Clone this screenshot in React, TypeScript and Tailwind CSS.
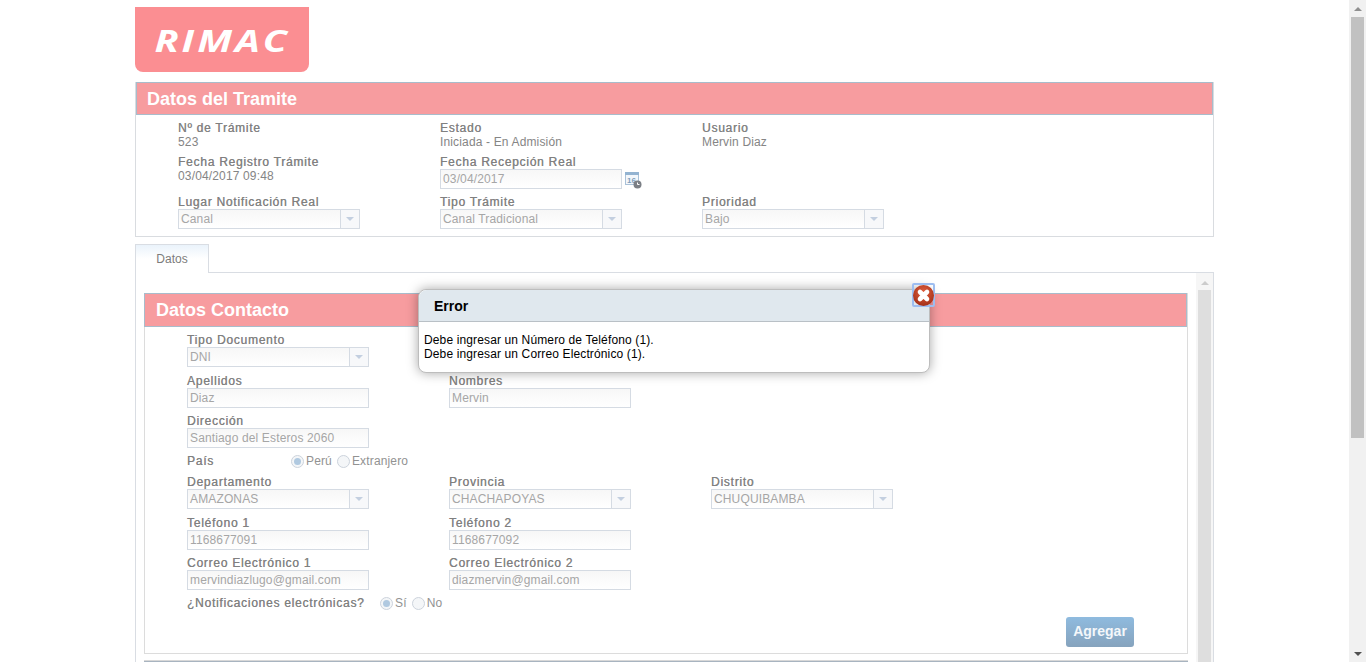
import React from "react";

const labelCls =
  "h-[14px] text-[12px] leading-[14px] tracking-[0.74px] text-[#808080] whitespace-nowrap [text-shadow:0.3px_0_0_#9c9c9c]";
const inputCls =
  "h-[20px] w-[182px] border border-[#d5dbe3] bg-gradient-to-b from-[#f7f7f7] to-white flex items-center text-[12px] leading-[14px] tracking-[0.14px] text-[#a6a6a6] whitespace-nowrap";

function Label({ children }: { children: React.ReactNode }) {
  return <div className={labelCls}>{children}</div>;
}

function Input({ value }: { value: string }) {
  return <div className={`${inputCls} pl-[2px]`}>{value}</div>;
}

function Select({ value }: { value: string }) {
  return (
    <div className={`${inputCls} mb-[1px]`}>
      <div className="flex-1 pl-[2px]">{value}</div>
      <div className="h-full w-[19px] border-l border-[#d5dbe3] bg-[#f7f8fa] flex items-center justify-center">
        <div className="w-0 h-0 border-l-[4px] border-r-[4px] border-t-[4px] border-l-transparent border-r-transparent border-t-[#c3cfe0]" />
      </div>
    </div>
  );
}

function Field({ label, children }: { label: string; children: React.ReactNode }) {
  return (
    <div className="flex flex-col">
      <Label>{label}</Label>
      {children}
    </div>
  );
}

function Row({ children, className = "" }: { children: React.ReactNode; className?: string }) {
  return <div className={`grid grid-cols-[262px_262px_262px] ${className}`}>{children}</div>;
}

function Value({ children }: { children: React.ReactNode }) {
  return (
    <div className="h-[14px] text-[12px] leading-[14px] tracking-[0.15px] text-[#858585] whitespace-nowrap">
      {children}
    </div>
  );
}

function Radio({ checked, label }: { checked?: boolean; label: string }) {
  return (
    <div className="flex items-center gap-[2px]">
      <div className="w-[13px] h-[13px] rounded-full border border-[#ccd3dc] bg-[#f4f6f8] flex items-center justify-center">
        {checked && <div className="w-[7px] h-[7px] rounded-full bg-[#b0c9e0]" />}
      </div>
      <span className="text-[12px] leading-[14px] tracking-[0.15px] text-[#929292]">{label}</span>
    </div>
  );
}

function Header({ children, className = "" }: { children: React.ReactNode; className?: string }) {
  return (
    <div className={`border border-[#a8bccb] bg-[#f79c9f] flex items-center text-[18px] font-bold leading-[20px] text-white ${className}`}>
      {children}
    </div>
  );
}

function ArrowUp({ color }: { color: string }) {
  return <div className={`w-0 h-0 border-l-[4px] border-r-[4px] border-b-[4px] border-l-transparent border-r-transparent ${color}`} />;
}

function CalendarIcon() {
  return (
    <svg width="17" height="17" viewBox="0 0 17 17" className="ml-[3px] mt-[3px]">
      <rect x="0.5" y="0.5" width="13" height="12" fill="#f3f7fb" stroke="#a9c1d8" />
      <rect x="0" y="0" width="14" height="3" fill="#93b3d1" />
      <text x="2" y="11" fontSize="8" fontWeight="700" fontFamily="Liberation Sans" fill="#7f9dbb">16</text>
      <circle cx="12.5" cy="12.5" r="4" fill="#7b7f85" />
      <path d="M12.5 10.5V12.5H14.5" stroke="#fff" strokeWidth="1" fill="none" />
    </svg>
  );
}

function CloseIcon() {
  return (
    <svg width="21" height="21" viewBox="0 0 21 21" className="shrink-0">
      <defs>
        <radialGradient id="cg" cx="50%" cy="35%" r="65%">
          <stop offset="0%" stopColor="#e2603f" />
          <stop offset="100%" stopColor="#a32f17" />
        </radialGradient>
      </defs>
      <circle cx="10.5" cy="10.5" r="10.5" fill="url(#cg)" />
      <path d="M7 7L14 14M14 7L7 14" stroke="#fff" strokeWidth="4.6" strokeLinecap="round" />
    </svg>
  );
}

export default function App() {
  return (
    <div className="relative h-[662px] w-full overflow-hidden bg-white flex font-['Liberation_Sans',Arial,sans-serif]">
      <div className="w-[1349px] pl-[135px] shrink-0">
        <div className="w-[1079px]">
          <div className="mt-[7px] h-[65px] w-[174px] rounded-b-[8px] bg-[#fb8e92] flex items-center justify-center pl-[1px] pt-[2px]">
            <span className="inline-block origin-center scale-x-[1.32] font-['Open_Sans',sans-serif] text-[30px] italic font-bold leading-none tracking-[2.2px] text-white">
              RIMAC
            </span>
          </div>

          <div className="mt-[10px] h-[155px] border border-[#d9dce0]">
            <Header className="-mt-px h-[33px] pl-[10px]">Datos del Tramite</Header>
            <div className="pl-[42px] pt-[6px]">
              <Row>
                <Field label="Nº de Trámite"><Value>523</Value></Field>
                <Field label="Estado"><Value>Iniciada - En Admisión</Value></Field>
                <Field label="Usuario"><Value>Mervin Diaz</Value></Field>
              </Row>
              <Row className="mt-[6px]">
                <Field label="Fecha Registro Trámite"><Value>03/04/2017 09:48</Value></Field>
                <Field label="Fecha Recepción Real">
                  <div className="flex">
                    <Input value="03/04/2017" />
                    <CalendarIcon />
                  </div>
                </Field>
              </Row>
              <Row className="mt-[6px]">
                <Field label="Lugar Notificación Real"><Select value="Canal" /></Field>
                <Field label="Tipo Trámite"><Select value="Canal Tradicional" /></Field>
                <Field label="Prioridad"><Select value="Bajo" /></Field>
              </Row>
            </div>
          </div>

          <div className="mt-[7px] h-[29px] w-[74px] border border-b-0 border-[#d9dde3] bg-gradient-to-b from-[#eaf3fb] via-white to-white relative z-10 flex items-center justify-center text-[12px] text-[#7c7c7c]">
            Datos
          </div>

          <div className="mt-[-1px] h-[400px] border border-[#d9dde3] flex">
            <div className="w-[1060px] pl-[8px] pt-[20px]">
              <div className="h-[361px] w-[1044px] border border-[#dcdcdc] border-t-0">
                <Header className="-ml-px h-[34px] pl-[11px]">Datos Contacto</Header>
                <div className="pl-[42px] pt-[6px]">
                  <Row>
                    <Field label="Tipo Documento"><Select value="DNI" /></Field>
                  </Row>
                  <Row className="mt-[6px]">
                    <Field label="Apellidos"><Input value="Diaz" /></Field>
                    <Field label="Nombres"><Input value="Mervin" /></Field>
                  </Row>
                  <Row className="mt-[6px]">
                    <Field label="Dirección"><Input value="Santiago del Esteros 2060" /></Field>
                  </Row>
                  <div className="mt-[4px] h-[18px] flex items-center">
                    <div className="w-[104px]"><Label>País</Label></div>
                    <div className="flex gap-[5px]">
                      <Radio checked label="Perú" />
                      <Radio label="Extranjero" />
                    </div>
                  </div>
                  <Row className="mt-[5px]">
                    <Field label="Departamento"><Select value="AMAZONAS" /></Field>
                    <Field label="Provincia"><Select value="CHACHAPOYAS" /></Field>
                    <Field label="Distrito"><Select value="CHUQUIBAMBA" /></Field>
                  </Row>
                  <Row className="mt-[6px]">
                    <Field label="Teléfono 1"><Input value="1168677091" /></Field>
                    <Field label="Teléfono 2"><Input value="1168677092" /></Field>
                  </Row>
                  <Row className="mt-[6px]">
                    <Field label="Correo Electrónico 1"><Input value="mervindiazlugo@gmail.com" /></Field>
                    <Field label="Correo Electrónico 2"><Input value="diazmervin@gmail.com" /></Field>
                  </Row>
                  <div className="mt-[6px] h-[14px] flex items-center">
                    <div className="w-[193px]"><Label>¿Notificaciones electrónicas?</Label></div>
                    <div className="flex gap-[5px]">
                      <Radio checked label="Sí" />
                      <Radio label="No" />
                    </div>
                  </div>
                </div>
                <div className="flex justify-end pr-[53px] mt-[7px]">
                  <div className="h-[30px] w-[68px] pb-[2px] rounded-[3px] bg-gradient-to-b from-[#8fbbdf] to-[#86a3bd] flex items-center justify-center text-[14px] font-bold text-[#f4f7fa]">
                    Agregar
                  </div>
                </div>
              </div>
              <div className="mt-[6px] h-[33px] w-[1044px] border-t border-[#d8d8d8] bg-[#a8b4c0]" />
            </div>
            <div className="w-[17px] bg-[#f6f6f6] flex flex-col items-center">
              <div className="h-[17px] flex items-center justify-center pt-[2px]">
                <ArrowUp color="border-b-[#cccccc]" />
              </div>
              <div className="w-[13px] flex-1 bg-[#dedede]" />
            </div>
          </div>
        </div>
      </div>

      <div className="w-[17px] h-full bg-[#f1f1f1] flex flex-col items-center">
        <div className="h-[17px] flex items-center justify-center">
          <ArrowUp color="border-b-[#8f8f8f]" />
        </div>
        <div className="w-[13px] h-[421px] bg-[#c1c1c1]" />
        <div className="flex-1" />
        <div className="h-[17px] flex items-center justify-center">
          <div className="w-0 h-0 border-l-[4px] border-r-[4px] border-t-[4px] border-l-transparent border-r-transparent border-t-[#505050]" />
        </div>
      </div>

      <div className="absolute left-[418px] top-[289px] z-20 h-[84px] w-[512px] rounded-[8px] border border-[#bdbdbd] bg-white shadow-[0_0_12px_rgba(0,0,0,0.35)]">
        <div className="h-[32px] pt-[2px] rounded-t-[8px] border-b border-[#b9c0c6] bg-[#e0e8ee] pl-[15px] flex items-center text-[14px] font-bold text-black">
          Error
        </div>
        <div className="pl-[5px] pt-[11px] text-[12px] leading-[14px] tracking-[0.13px] text-black">
          <div>Debe ingresar un Número de Teléfono (1).</div>
          <div>Debe ingresar un Correo Electrónico (1).</div>
        </div>
        <div className="absolute left-[493px] top-[-7px] h-[24px] w-[23px] rounded-[2px] border-2 border-[#9dbdf0] flex items-center justify-center">
          <CloseIcon />
        </div>
      </div>
    </div>
  );
}
